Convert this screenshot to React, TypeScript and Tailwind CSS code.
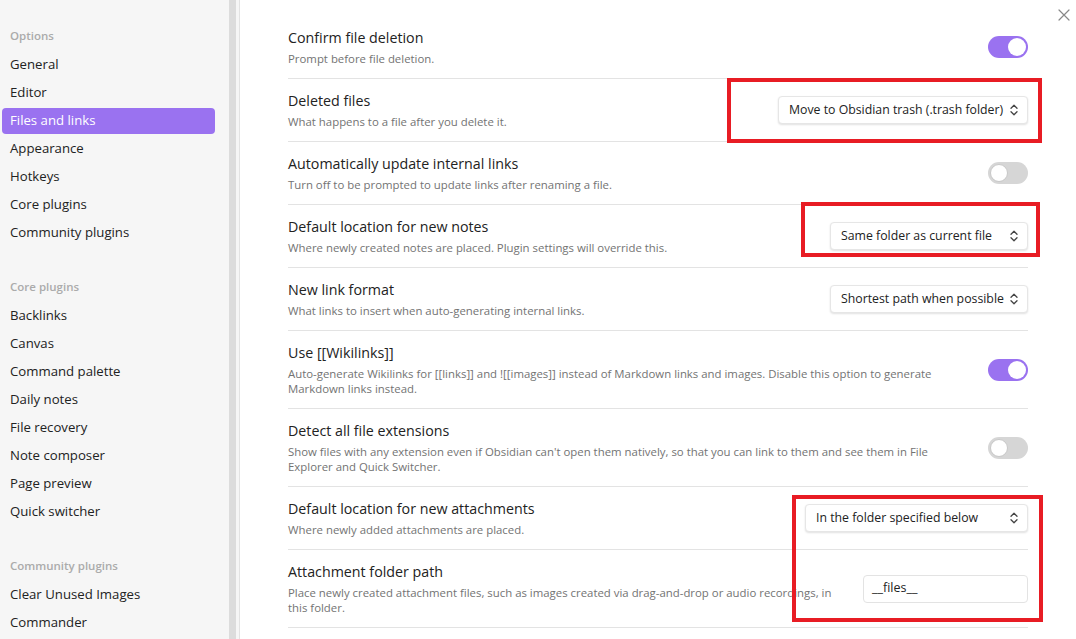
import React from "react";

type Row = {
  title: string;
  desc: string[];
  control: React.ReactNode;
};

function Toggle({ on }: { on: boolean }) {
  return on ? (
    <div className="flex h-[22px] w-[40px] shrink-0 items-center justify-end rounded-full bg-[#9a72f0] px-[2px]">
      <div className="h-[18px] w-[18px] rounded-full bg-white" />
    </div>
  ) : (
    <div className="flex h-[22px] w-[40px] shrink-0 items-center justify-start rounded-full bg-[#d6d6d6] px-[2px]">
      <div className="h-[18px] w-[18px] rounded-full border border-[#c8c8c8] bg-white" />
    </div>
  );
}

function Chevrons() {
  return (
    <svg width="8" height="12" viewBox="0 0 8 12" fill="none" stroke="#444" strokeWidth="1.3" strokeLinecap="round" strokeLinejoin="round">
      <path d="M1 4.2 L4 1.2 L7 4.2" />
      <path d="M1 7.8 L4 10.8 L7 7.8" />
    </svg>
  );
}

function Select({ value, width }: { value: string; width: string }) {
  return (
    <div
      className={`flex h-[28px] shrink-0 items-center justify-between rounded-[4px] border border-[#e6e6e6] bg-white pl-[10px] pr-[9px] text-[12.3px] text-[#222] shadow-[0_1px_2px_rgba(0,0,0,0.12)] ${width}`}
    >
      <span className="whitespace-nowrap">{value}</span>
      <Chevrons />
    </div>
  );
}

const rows: Row[] = [
  {
    title: "Confirm file deletion",
    desc: ["Prompt before file deletion."],
    control: <Toggle on />,
  },
  {
    title: "Deleted files",
    desc: ["What happens to a file after you delete it."],
    control: <Select value="Move to Obsidian trash (.trash folder)" width="w-[250px]" />,
  },
  {
    title: "Automatically update internal links",
    desc: ["Turn off to be prompted to update links after renaming a file."],
    control: <Toggle on={false} />,
  },
  {
    title: "Default location for new notes",
    desc: ["Where newly created notes are placed. Plugin settings will override this."],
    control: <Select value="Same folder as current file" width="w-[198px]" />,
  },
  {
    title: "New link format",
    desc: ["What links to insert when auto-generating internal links."],
    control: <Select value="Shortest path when possible" width="w-[198px]" />,
  },
  {
    title: "Use [[Wikilinks]]",
    desc: [
      "Auto-generate Wikilinks for [[links]] and ![[images]] instead of Markdown links and images. Disable this option to generate",
      "Markdown links instead.",
    ],
    control: <Toggle on />,
  },
  {
    title: "Detect all file extensions",
    desc: [
      "Show files with any extension even if Obsidian can't open them natively, so that you can link to them and see them in File",
      "Explorer and Quick Switcher.",
    ],
    control: <Toggle on={false} />,
  },
  {
    title: "Default location for new attachments",
    desc: ["Where newly added attachments are placed."],
    control: <Select value="In the folder specified below" width="w-[223px]" />,
  },
  {
    title: "Attachment folder path",
    desc: [
      "Place newly created attachment files, such as images created via drag-and-drop or audio recordings, in",
      "this folder.",
    ],
    control: (
      <div className="flex h-[28px] w-[165px] shrink-0 items-center rounded-[4px] border border-[#e3e3e3] bg-white px-[8px] text-[12.5px] text-[#222]">
        __files__
      </div>
    ),
  },
];

const sections = [
  {
    title: "Options",
    items: ["General", "Editor", "Files and links", "Appearance", "Hotkeys", "Core plugins", "Community plugins"],
  },
  {
    title: "Core plugins",
    items: ["Backlinks", "Canvas", "Command palette", "Daily notes", "File recovery", "Note composer", "Page preview", "Quick switcher"],
  },
  {
    title: "Community plugins",
    items: ["Clear Unused Images", "Commander"],
  },
];

export default function App() {
  return (
    <div className="relative flex h-[639px] w-[1076px] overflow-hidden bg-white font-['Open_Sans',sans-serif]">
      {/* sidebar */}
      <div className="flex h-full shrink-0 bg-[#f6f6f6]">
        <div className="w-[229px] pl-[2px] pr-[14px] pt-[21px]">
          {sections.map((s, i) => (
            <div key={s.title} className={i > 0 ? "mt-[25px]" : ""}>
              <div className="flex h-[30px] items-center px-[8px] text-[11.5px] font-semibold text-[#ababab]">{s.title}</div>
              {s.items.map((it) => (
                <div key={it} className="h-[28px] py-px">
                  <div
                    className={
                      it === "Files and links" && s.title === "Options"
                        ? "flex h-[26px] items-center rounded-[4px] bg-[#9a72f0] px-[8px] text-[13.2px] text-white"
                        : "flex h-[26px] items-center px-[8px] text-[13.2px] text-[#222]"
                    }
                  >
                    {it}
                  </div>
                </div>
              ))}
            </div>
          ))}
        </div>
        <div className="h-full w-[7px] bg-[#dcdcdc]" />
        <div className="h-full w-[3px]" />
        <div className="h-full w-px bg-[#e3e3e3]" />
      </div>

      {/* content */}
      <div className="min-w-0 flex-1 px-[48px] pt-[16px]">
        {rows.map((r) => (
          <div key={r.title} className="flex items-center border-b border-[#e3e3e3] py-[12px]">
            <div className="mr-[16px] min-w-0 flex-1">
              <div className="text-[14.25px] leading-[20px] text-[#222]">{r.title}</div>
              <div className="mt-[3px] text-[11.4px] leading-[15px] text-[#737373]">
                {r.desc.map((d, i) => (
                  <div key={i} className="whitespace-nowrap">
                    {d}
                  </div>
                ))}
              </div>
            </div>
            {r.control}
          </div>
        ))}
      </div>

      {/* close */}
      <div className="absolute left-[1058px] top-[9px] text-[#888]">
        <svg width="12" height="12" viewBox="0 0 12 12" stroke="currentColor" strokeWidth="1.2" strokeLinecap="round">
          <path d="M1 1 L11 11 M11 1 L1 11" />
        </svg>
      </div>

      {/* red annotation boxes */}
      <div className="pointer-events-none absolute left-[727px] top-[78px] h-[65px] w-[315px] border-4 border-[#e81c24]" />
      <div className="pointer-events-none absolute left-[801px] top-[202px] h-[55px] w-[239px] border-4 border-[#e81c24]" />
      <div className="pointer-events-none absolute left-[792px] top-[495px] h-[127px] w-[251px] border-4 border-[#e81c24]" />
    </div>
  );
}
